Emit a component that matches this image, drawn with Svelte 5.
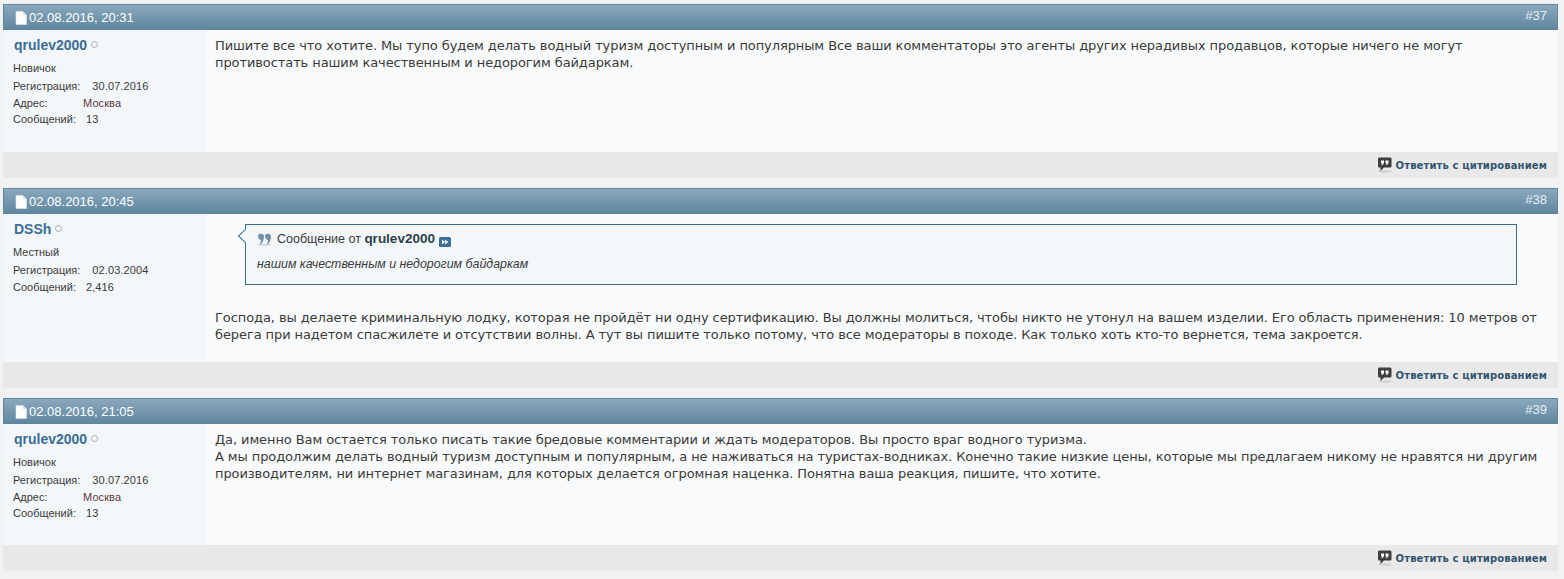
<script>
  const posts = [
    {
      id: 37, date: '02.08.2016, 20:31', user: 'qrulev2000', rank: 'Новичок', reg: '30.07.2016',
      addr: 'Москва', count: '13',
      lines: ['Пишите все что хотите. Мы тупо будем делать водный туризм доступным и популярным Все ваши комментаторы это агенты других нерадивых продавцов, которые ничего не могут противостать нашим качественным и недорогим байдаркам.']
    },
    {
      id: 38, date: '02.08.2016, 20:45', user: 'DSSh', rank: 'Местный', reg: '02.03.2004',
      count: '2,416',
      quote: { from: 'qrulev2000', text: 'нашим качественным и недорогим байдаркам' },
      lines: ['Господа, вы делаете криминальную лодку, которая не пройдёт ни одну сертификацию. Вы должны молиться, чтобы никто не утонул на вашем изделии. Его область применения: 10 метров от берега при надетом спасжилете и отсутствии волны. А тут вы пишите только потому, что все модераторы в походе. Как только хоть кто-то вернется, тема закроется.']
    },
    {
      id: 39, date: '02.08.2016, 21:05', user: 'qrulev2000', rank: 'Новичок', reg: '30.07.2016',
      addr: 'Москва', count: '13',
      lines: [
        'Да, именно Вам остается только писать такие бредовые комментарии и ждать модераторов. Вы просто враг водного туризма.',
        'А мы продолжим делать водный туризм доступным и популярным, а не наживаться на туристах-водниках. Конечно такие низкие цены, которые мы предлагаем никому не нравятся ни другим производителям, ни интернет магазинам, для которых делается огромная наценка. Понятна ваша реакция, пишите, что хотите.'
      ]
    }
  ];
</script>

<div class="thread">
  {#each posts as post}
    <div class="post" class:tall={post.quote} class:last={post.id === 39}>
      <div class="head">
        <span class="date">
          <svg class="doc" width="12" height="14" viewBox="0 0 12 14">
            <path d="M1 0.5H8L11.5 4V13.5H1Z" fill="#fff" stroke="#dfe6ea" stroke-width="0.6" />
            <path d="M8 0.5V4H11.5" fill="#d5dde2" />
          </svg>
          {post.date}
        </span>
        <span class="num">#{post.id}</span>
      </div>
      <div class="main">
        <div class="side">
          <div class="name-row">
            <span class="name">{post.user}</span>
            <span class="dot"></span>
          </div>
          <div class="rank">{post.rank}</div>
          <dl>
            <div class="row"><dt class="reg">Регистрация:</dt><dd>{post.reg}</dd></div>
            {#if post.addr}
              <div class="row addr-row"><dt class="addr">Адрес:</dt><dd class="city">{post.addr}</dd></div>
            {/if}
            <div class="row"><dt>Сообщений:</dt><dd>{post.count}</dd></div>
          </dl>
        </div>
        <div class="body">
          {#if post.quote}
            <div class="quote">
              <div class="q-from">
                <svg width="15" height="13" viewBox="0 0 15 13">
                  <ellipse cx="7.500" cy="11.800" rx="7" ry="1" fill="#d5d9dc" />
                  <path d="M1.500 1.500C3 .2 6.500 .2 7 3C7.300 6 5.500 9.500 3.800 11.500L2.800 11C3.800 9.500 4.200 8 4 7C1.800 7 .3 3.500 1.500 1.500Z" fill="#7390a6" />
                  <path d="M8.500 1.500C10 .2 13.500 .2 14 3C14.300 6 12.500 9.500 10.800 11.500L9.800 11C10.800 9.500 11.200 8 11 7C8.800 7 7.300 3.500 8.500 1.500Z" fill="#7390a6" />
                </svg>
                <span>Сообщение от <b>{post.quote.from}</b></span>
                <svg class="go" width="12" height="10" viewBox="0 0 12 10">
                  <rect width="12" height="10" rx="1.500" fill="#3e6f97" />
                  <path d="M3 2.500L6 5L3 7.500ZM6.200 2.500L9.200 5L6.200 7.500Z" fill="#fff" />
                </svg>
              </div>
              <div class="q-text">{post.quote.text}</div>
            </div>
          {/if}
          {#each post.lines as line}
            <div class="line">{line}</div>
          {/each}
        </div>
      </div>
      <div class="foot">
        <svg width="16" height="16" viewBox="0 0 16 16">
          <ellipse cx="8" cy="14.500" rx="7" ry="1.200" fill="#cfcfcf" />
          <path d="M2.500 0.500H13C14 0.500 14.500 1 14.500 2V9C14.500 10 14 10.500 13 10.500H7L3.500 14V10.500H2.500C1.500 10.500 1 10 1 9V2C1 1 1.500 0.500 2.500 0.500Z" fill="#3f3f3f" />
          <path d="M4 3.500H7V6.200L5.300 8H4.300L5.200 6.200H4ZM8.500 3.500H11.500V6.200L9.800 8H8.800L9.700 6.200H8.500Z" fill="#fff" />
        </svg>
        <span>Ответить с цитированием</span>
      </div>
    </div>
  {/each}
</div>

<style>
  :global(body) {
    background: #f2f2f2;
  }

  .thread {
    padding: 4px 6px 0 3px;
    font-family: "DejaVu Sans", Verdana, sans-serif;
    color: #3a3a3a;
  }

  .post {
    margin-bottom: 10px;
    background: #f9fafb;
  }

  .head {
    height: 26px;
    box-sizing: border-box;
    border: 1px solid #5f86a3;
    border-bottom: none;
    background: linear-gradient(#8ba8bc, #5e859f);
    color: #fff;
    display: flex;
    justify-content: space-between;
    padding: 0 10px 0 11px;
    font-family: "Liberation Sans", Arial, sans-serif;
    font-size: 13px;
    line-height: 26px;
  }

  .date {
    display: flex;
    align-items: center;
    gap: 2px;
    padding-top: 1px;
  }

  .num {
    line-height: 22px;
    color: #e6edf2;
  }

  .main {
    display: flex;
    height: 122px;
  }

  .tall .main {
    height: 148px;
  }

  .last .main {
    height: 121px;
  }

  .side {
    width: 190px;
    padding: 6px 0 0 11px;
    background: #f3f7fa;
    border-right: 1px solid #eef0f2;
    font-family: "Liberation Sans", Arial, sans-serif;
    font-size: 11px;
    flex: none;
  }

  .name-row {
    display: flex;
    align-items: center;
    gap: 4px;
    height: 17px;
  }

  .name {
    font-weight: bold;
    font-size: 14px;
    color: #3b6d94;
  }

  .dot {
    width: 5px;
    height: 5px;
    border: 1px solid #a8b0b5;
    border-radius: 50%;
  }

  .rank {
    margin-top: 8px;
    margin-left: -1px;
    line-height: 14px;
  }

  dl {
    margin: 4px 0 0 -1px;
  }

  .row {
    display: flex;
    line-height: 14px;
    margin-bottom: 3px;
  }

  .addr-row {
    margin-bottom: 2px;
  }

  dt {
    margin-right: 10px;
  }

  .reg {
    margin-right: 12px;
  }

  dd {
    margin: 0;
    letter-spacing: 0.1px;
  }

  .addr {
    width: 59px;
    margin-right: 11px;
  }

  .city {
    color: #5a3b3b;
  }

  .body {
    flex: 1;
    padding: 7px 10px 0 10px;
    font-size: 13px;
    line-height: 17px;
    letter-spacing: -0.09px;
  }

  .quote {
    position: relative;
    margin: 3px 31px 0 30px;
    height: 61px;
    box-sizing: border-box;
    border: 1px solid #3d6f93;
    background: #f3f7fa;
    padding: 5px 11px;
    font-family: "Liberation Sans", Arial, sans-serif;
    font-size: 12.5px;
    letter-spacing: 0;
  }

  .quote::before {
    content: "";
    position: absolute;
    left: -6px;
    top: 6px;
    width: 9px;
    height: 9px;
    background: #f3f7fa;
    border-left: 1px solid #3d6f93;
    border-bottom: 1px solid #3d6f93;
    transform: rotate(45deg);
  }

  .q-from {
    display: flex;
    align-items: center;
    gap: 5px;
    position: relative;
  }

  .q-from b {
    color: #2f3f4a;
    font-size: 13.5px;
  }

  .go {
    margin-top: 6px;
    margin-left: -1px;
  }

  .q-text {
    margin-top: 8px;
    font-style: italic;
    font-size: 12.4px;
  }

  .quote + .line {
    margin-top: 24px;
  }

  .foot {
    height: 26px;
    background: #e9e9e9;
    display: flex;
    justify-content: flex-end;
    align-items: center;
    gap: 3px;
    padding-right: 11px;
    font-size: 10px;
    font-weight: bold;
    letter-spacing: 0.13px;
    color: #33556f;
  }
</style>
